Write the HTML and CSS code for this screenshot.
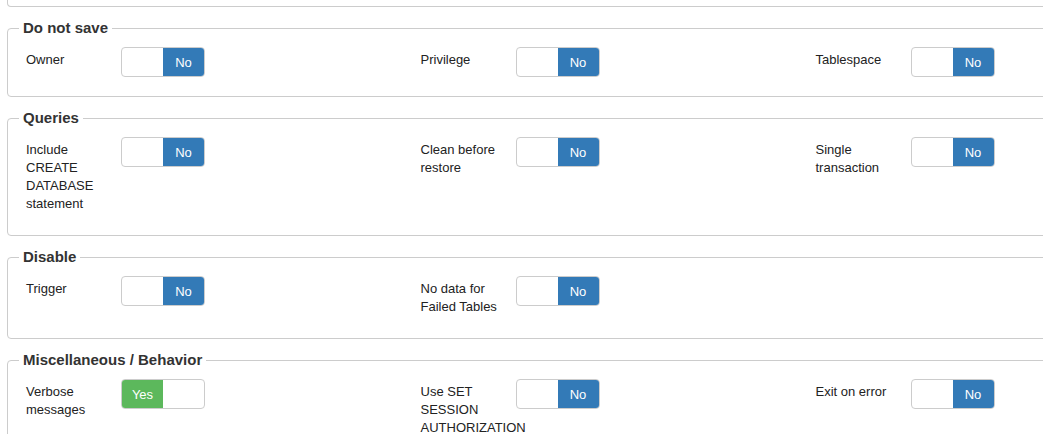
FILE: index.html
```html
<!DOCTYPE html>
<html>
<head>
<meta charset="utf-8">
<link rel="stylesheet" href="styles.css">
</head>
<body>
<div class="page">
  <div class="fs-tail"></div>

  <fieldset class="group">
    <legend class="group-title">Do not save</legend>
    <div class="grid">
      <div class="field"><label class="lbl">Owner</label><div class="switch"><span class="half"></span><span class="half no">No</span></div></div>
      <div class="field"><label class="lbl">Privilege</label><div class="switch"><span class="half"></span><span class="half no">No</span></div></div>
      <div class="field"><label class="lbl">Tablespace</label><div class="switch"><span class="half"></span><span class="half no">No</span></div></div>
    </div>
  </fieldset>

  <fieldset class="group">
    <legend class="group-title">Queries</legend>
    <div class="grid">
      <div class="field"><label class="lbl">Include CREATE DATABASE statement</label><div class="switch"><span class="half"></span><span class="half no">No</span></div></div>
      <div class="field"><label class="lbl">Clean before restore</label><div class="switch"><span class="half"></span><span class="half no">No</span></div></div>
      <div class="field"><label class="lbl">Single transaction</label><div class="switch"><span class="half"></span><span class="half no">No</span></div></div>
    </div>
  </fieldset>

  <fieldset class="group">
    <legend class="group-title">Disable</legend>
    <div class="grid">
      <div class="field"><label class="lbl">Trigger</label><div class="switch"><span class="half"></span><span class="half no">No</span></div></div>
      <div class="field"><label class="lbl">No data for Failed Tables</label><div class="switch"><span class="half"></span><span class="half no">No</span></div></div>
    </div>
  </fieldset>

  <fieldset class="group">
    <legend class="group-title">Miscellaneous / Behavior</legend>
    <div class="grid">
      <div class="field"><label class="lbl">Verbose messages</label><div class="switch"><span class="half yes">Yes</span><span class="half"></span></div></div>
      <div class="field"><label class="lbl">Use SET SESSION AUTHORIZATION</label><div class="switch"><span class="half"></span><span class="half no">No</span></div></div>
      <div class="field"><label class="lbl">Exit on error</label><div class="switch"><span class="half"></span><span class="half no">No</span></div></div>
    </div>
  </fieldset>
</div>
</body>
</html>
```

FILE: styles.css
```css
html, body {
  margin: 0;
  padding: 0;
  background: #fff;
  overflow: hidden;
}

body {
  font-family: "Liberation Sans", Arial, sans-serif;
  font-size: 13px;
  color: #222;
}

.page {
  width: 1200px;
  padding-left: 7px;
}

.fs-tail {
  height: 6px;
  border: 1px solid #ccc;
  border-top: none;
  border-radius: 0 0 4px 4px;
  margin-bottom: 11px;
}

.group {
  margin: 0 0 11px 0;
  padding: 9px 0 19px 3px;
  border: 1px solid #ccc;
  border-radius: 4px;
  min-width: 0;
}

.group-title {
  margin-left: 8px;
  padding: 0 4px;
  font-size: 15px;
  font-weight: bold;
  line-height: 20px;
  color: #333;
}

.grid {
  display: grid;
  grid-template-columns: 394.5px 395px 395px;
}

.field {
  display: flex;
  align-items: flex-start;
  padding-left: 15px;
}

.lbl {
  width: 80px;
  flex: none;
  margin-right: 15px;
  padding: 4px 0 3px;
  line-height: 18px;
  color: #222;
}

.switch {
  display: flex;
  width: 84px;
  height: 30px;
  box-sizing: border-box;
  border: 1px solid #ccc;
  border-radius: 4px;
  overflow: hidden;
  flex: none;
}

.half {
  flex: 1;
  display: flex;
  align-items: center;
  justify-content: center;
  color: #fff;
  font-size: 13px;
}

.half.no {
  background: #337ab7;
}

.half.yes {
  background: #5cb85c;
}
```
